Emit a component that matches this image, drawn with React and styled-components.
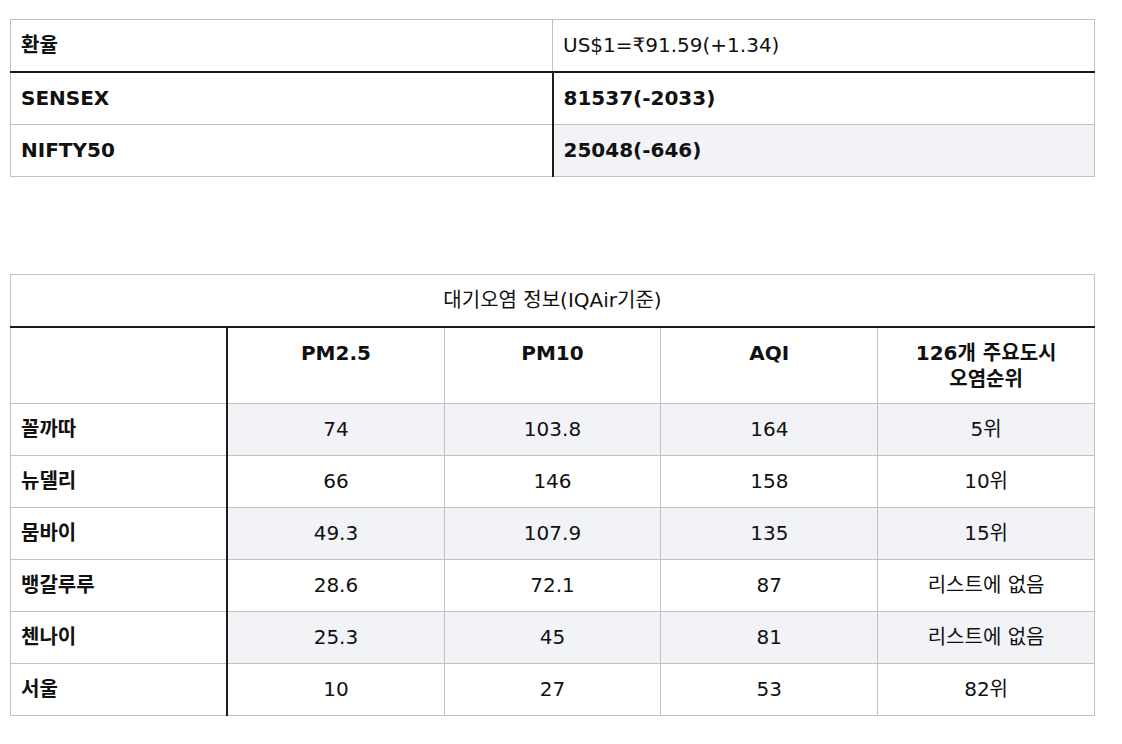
import React from "react";
import styled, { createGlobalStyle } from "styled-components";

const Global = createGlobalStyle`
  html, body { margin: 0; padding: 0; background: #ffffff; }
  body {
    font-family: "DejaVu Sans", "Noto Sans CJK KR", sans-serif;
    color: #111111;
  }
`;

const Page = styled.div`
  display: flex;
  flex-direction: column;
  gap: 97px;
  padding: 19px 27px 0 10px;
  width: 1085px;
`;

const Table = styled.table`
  width: 100%;
  border-collapse: collapse;
  table-layout: fixed;
  font-size: 20px;
  line-height: 26px;
`;

const Cell = styled.td`
  border: 1px solid #c2c2c2;
  padding: ${(p) => (p.$top ? "12px 10px 11px" : "12px 10px 13px")};
  text-align: ${(p) => (p.$center ? "center" : "left")};
  vertical-align: ${(p) => (p.$top ? "top" : "middle")};
  font-weight: ${(p) => (p.$bold ? 700 : 400)};
  background: ${(p) => (p.$shade ? "#f2f3f7" : "#ffffff")};
  border-bottom: ${(p) => (p.$darkBottom ? "2px solid #1c1c1c" : "1px solid #c2c2c2")};
  border-right: ${(p) => (p.$darkRight ? "2px solid #1c1c1c" : "1px solid #c2c2c2")};
`;

const market = [
  ["SENSEX", "81537(-2033)"],
  ["NIFTY50", "25048(-646)"],
];

const air = [
  ["꼴까따", "74", "103.8", "164", "5위"],
  ["뉴델리", "66", "146", "158", "10위"],
  ["뭄바이", "49.3", "107.9", "135", "15위"],
  ["뱅갈루루", "28.6", "72.1", "87", "리스트에 없음"],
  ["첸나이", "25.3", "45", "81", "리스트에 없음"],
  ["서울", "10", "27", "53", "82위"],
];

export default function App() {
  return (
    <>
      <Global />
      <Page>
        <Table>
          <tbody>
            <tr>
              <Cell $bold $darkBottom>환율</Cell>
              <Cell $darkBottom>US$1=₹91.59(+1.34)</Cell>
            </tr>
            {market.map((r, i) => (
              <tr key={r[0]}>
                <Cell $bold $darkRight>{r[0]}</Cell>
                <Cell $bold $shade={i % 2 === 1}>{r[1]}</Cell>
              </tr>
            ))}
          </tbody>
        </Table>

        <Table>
          <tbody>
            <tr>
              <Cell colSpan={5} $center $darkBottom>대기오염 정보(IQAir기준)</Cell>
            </tr>
            <tr>
              <Cell $darkRight $top />
              <Cell $center $top $bold>PM2.5</Cell>
              <Cell $center $top $bold>PM10</Cell>
              <Cell $center $top $bold>AQI</Cell>
              <Cell $center $top $bold>126개 주요도시<br />오염순위</Cell>
            </tr>
            {air.map((r, i) => (
              <tr key={r[0]}>
                <Cell $bold $darkRight>{r[0]}</Cell>
                {r.slice(1).map((v, j) => (
                  <Cell key={j} $center $shade={i % 2 === 0}>{v}</Cell>
                ))}
              </tr>
            ))}
          </tbody>
        </Table>
      </Page>
    </>
  );
}
